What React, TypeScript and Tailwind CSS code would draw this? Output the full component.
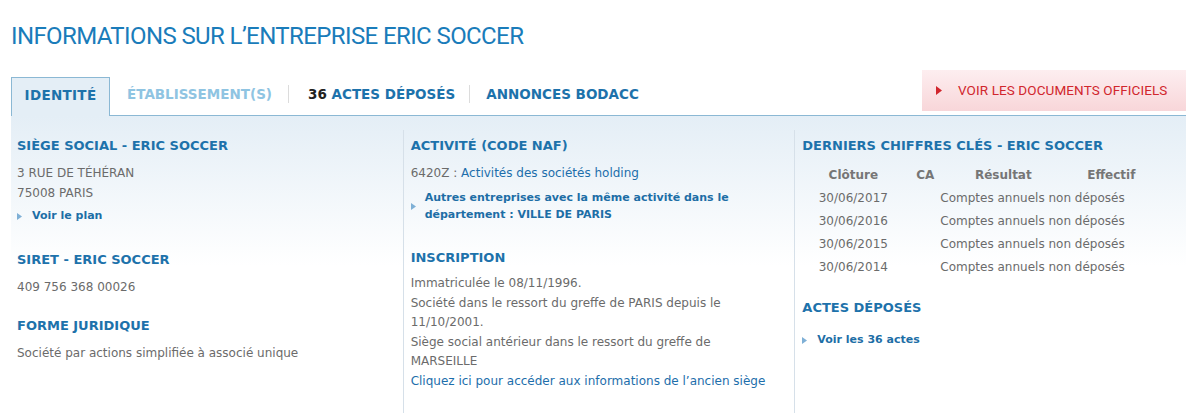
import React from 'react';

const Bullet: React.FC<{ className?: string }> = ({ className = '' }) => (
  <svg width="5" height="7" viewBox="0 0 5 7" className={`shrink-0 ${className}`}>
    <path d="M0 0 L5 3.5 L0 7 Z" fill="#7fb0d6" />
  </svg>
);

const Heading: React.FC<{ children: React.ReactNode; className?: string }> = ({ children, className = '' }) => (
  <h3 className={`text-[13px] leading-[16px] font-bold text-[#1d72ab] ${className}`}>{children}</h3>
);

const comptes = ['30/06/2017', '30/06/2016', '30/06/2015', '30/06/2014'];

const App: React.FC = () => {
  return (
    <div className="w-[1191px] h-[413px] overflow-hidden bg-white font-['DejaVu_Sans',sans-serif] text-[12px] text-[#6b6b6b]">
      <h1 className="pl-[11px] pt-[21px] font-['Roboto',sans-serif] text-[24px] leading-[30px] tracking-[-0.6px] text-[#1a7cba]">
        INFORMATIONS SUR L’ENTREPRISE ERIC SOCCER
      </h1>

      {/* Tabs */}
      <div className="mt-[19px] ml-[11px] w-[1175px] flex items-end justify-between border-b border-[#8bb8d4]">
        <div className="flex items-end text-[13.5px] font-bold leading-[16px]">
          <div className="-mb-px w-[99px] h-[39px] pt-[9px] text-center tracking-[0.3px] bg-[#e4eef6] border border-b-0 border-[#8bb8d4] text-[#1d72ab]">
            IDENTITÉ
          </div>
          <div className="flex items-center h-[38px] pb-[4px]">
            <span className="pl-[17px] pr-[16px] text-[#8fc4e2]">ÉTABLISSEMENT(S)</span>
            <span className="w-px h-[18px] bg-[#dcdcdc]" />
            <span className="pl-[19px] pr-[14px] text-[#1d72ab]">
              <span className="text-[#222]">36</span> ACTES DÉPOSÉS
            </span>
            <span className="w-px h-[18px] bg-[#dcdcdc]" />
            <span className="pl-[16px] text-[#1d72ab]">ANNONCES BODACC</span>
          </div>
        </div>
        <button className="mb-[4px] w-[264px] h-[41px] flex items-center gap-[16px] pl-[14px] bg-gradient-to-b from-[#fdeef0] to-[#f8d6d9] font-['Roboto',sans-serif] text-[13.5px] tracking-[0.1px] text-[#d1262d]">
          <svg width="6" height="9" viewBox="0 0 6 9">
            <path d="M0 0 L6 4.5 L0 9 Z" fill="#d1262d" />
          </svg>
          VOIR LES DOCUMENTS OFFICIELS
        </button>
      </div>

      {/* Content */}
      <div className="ml-[11px] w-[1175px] h-[320px] grid grid-cols-3 bg-[linear-gradient(to_bottom,#e4eef6_0px,#ffffff_150px)]">
        {/* Column 1 */}
        <div className="mt-[14px] pt-[8px] pl-[6px]">
          <Heading>SIÈGE SOCIAL - ERIC SOCCER</Heading>
          <p className="mt-[9px] leading-[20px]">
            3 RUE DE TÉHÉRAN
            <br />
            75008 PARIS
          </p>
          <a className="mt-[3px] flex items-center gap-[10px] text-[11px] leading-[20px] font-bold text-[#1d6ea6]">
            <Bullet />
            Voir le plan
          </a>
          <Heading className="mt-[26px]">SIRET - ERIC SOCCER</Heading>
          <p className="mt-[9px] leading-[20px]">409 756 368 00026</p>
          <Heading className="mt-[21px]">FORME JURIDIQUE</Heading>
          <p className="mt-[9px] leading-[20px]">Société par actions simplifiée à associé unique</p>
        </div>

        {/* Column 2 */}
        <div className="mt-[14px] pt-[8px] pl-[7px] border-l border-[#d6e0e9]">
          <Heading>ACTIVITÉ (CODE NAF)</Heading>
          <p className="mt-[9px] leading-[20px]">
            6420Z : <a className="text-[#1d6eab]">Activités des sociétés holding</a>
          </p>
          <a className="mt-[6px] flex items-center gap-[9px] text-[11px] leading-[17px] font-bold text-[#1d6ea6]">
            <Bullet />
            <span>
              Autres entreprises avec la même activité dans le
              <br />
              département : VILLE DE PARIS
            </span>
          </a>
          <Heading className="mt-[27px]">INSCRIPTION</Heading>
          <p className="mt-[8px] leading-[19.5px] whitespace-nowrap">
            Immatriculée le 08/11/1996.
            <br />
            Société dans le ressort du greffe de PARIS depuis le
            <br />
            11/10/2001.
            <br />
            Siège social antérieur dans le ressort du greffe de
            <br />
            MARSEILLE
            <br />
            <a className="text-[#1d6eab]">Cliquez ici pour accéder aux informations de l’ancien siège</a>
          </p>
        </div>

        {/* Column 3 */}
        <div className="mt-[14px] pt-[8px] pl-[7px] border-l border-[#d6e0e9]">
          <Heading>DERNIERS CHIFFRES CLÉS - ERIC SOCCER</Heading>
          <div className="mt-[10px] ml-[15px] leading-[23px]">
            <div className="flex font-bold text-[#767676]">
              <span className="w-[72px] text-center">Clôture</span>
              <span className="w-[72px] text-center">CA</span>
              <span className="w-[84px] text-center">Résultat</span>
              <span className="w-[132px] text-center">Effectif</span>
            </div>
            {comptes.map((d) => (
              <div key={d} className="flex">
                <span className="w-[72px] text-center">{d}</span>
                <span className="pl-[51px]">Comptes annuels non déposés</span>
              </div>
            ))}
          </div>
          <Heading className="mt-[21px]">ACTES DÉPOSÉS</Heading>
          <a className="mt-[14px] flex items-center gap-[10px] text-[11px] leading-[20px] font-bold text-[#1d6ea6]">
            <Bullet />
            Voir les 36 actes
          </a>
        </div>
      </div>
    </div>
  );
};

export default App;
